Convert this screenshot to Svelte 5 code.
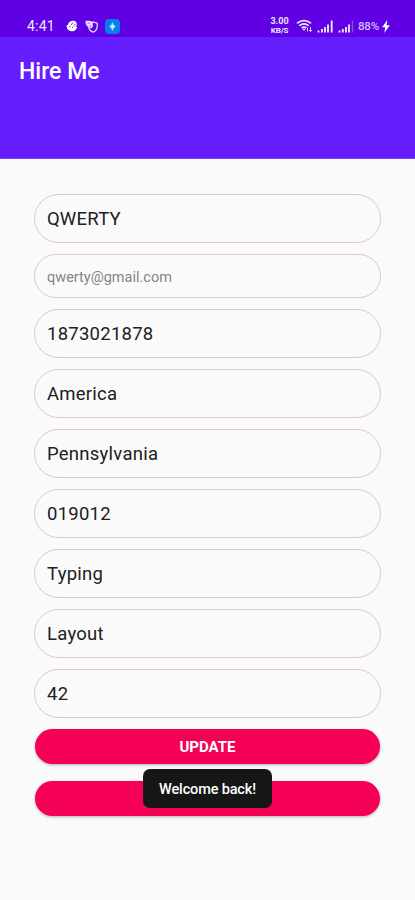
<script>
  const fields = [
    { name: "name", value: "QWERTY" },
    { name: "email", value: "qwerty@gmail.com", readonly: true },
    { name: "phone", value: "1873021878" },
    { name: "country", value: "America" },
    { name: "state", value: "Pennsylvania" },
    { name: "pincode", value: "019012" },
    { name: "skill", value: "Typing" },
    { name: "subject", value: "Layout" },
    { name: "age", value: "42" },
  ];
</script>

<div class="screen">
  <div class="status">
    <span class="time">4:41</span>
    <svg class="ball" width="12" height="12" viewBox="0 0 12 12">
      <path d="M6.500.8c2.500-.5 4.700 1.400 4.500 4.200L10 6l1 1.500c-.6 2.500-2.800 4-5.500 3.700C3 11 1.200 9.700 1 7.500L.5 5.500 2 4.800C2.200 2.500 4 1 6.500.8z" fill="#fff" />
      <path d="M7 2.500 5.200 5M3 6.800l1.600-.8M6 8l1.500-1.500M8 5l1.500-.5" stroke="#6a20e8" stroke-width=".9" fill="none" />
    </svg>
    <svg class="shield" width="13" height="13" viewBox="0 0 13 13">
      <path d="M4 3.200 8 2l4.200 1.200v3.300c0 2.600-1.700 4.600-4.200 5.700-2.500-1.100-4-2.700-4.200-5z" fill="none" stroke="#e6d8ff" stroke-width="1.300" />
      <path d="M.5.800h4.500l2.800 1.700v4L6.300 8.500 4 7.500 1.800 6 .6 4z" fill="#e6d8ff" />
      <path d="M2.500 3.200h2M5.500 5.500v1.500" stroke="#7a3cee" stroke-width=".8" />
    </svg>
    <svg class="app" width="15" height="15" viewBox="0 0 15 15">
      <rect width="15" height="15" rx="4" fill="#087df0" />
      <path d="M7.500 3 9 6 11 7.500 9 9 7.500 12 6 9 4 7.500 6 6z" fill="#8ee5ff" />
      <circle cx="7.500" cy="7.500" r="1" fill="#fff" />
    </svg>

    <div class="speed">
      <span>3.00</span>
      <span class="unit">KB/S</span>
    </div>
    <svg class="wifi" width="17" height="14" viewBox="0 0 17 14">
      <path d="M1 4.300C5 .8 11 .8 15 4.300M3.300 6.700c3-2.300 6.400-2.300 9.400 0M5.700 9c1.500-1.100 3.100-1.100 4.600 0" fill="none" stroke="#eee3ff" stroke-width="1.700" />
      <path d="M6.300 9.700h3.400L8 12z" fill="#eee3ff" />
      <path d="M11.500 12.500V8.500M14.500 8v4.500M13 11l1.500 1.500L16 11" fill="none" stroke="#d9c4ff" stroke-width="1" />
    </svg>
    <svg class="signal" width="17" height="13" viewBox="0 0 17 13">
      <path d="M1.500 12.500v-2M5 12.500V9M8 12.500V7M11 12.500V4.500M14.700 12.500V.5" stroke="#eee3ff" stroke-width="1.900" />
    </svg>
    <svg class="signal" width="17" height="13" viewBox="0 0 17 13">
      <path d="M1.500 12.500v-2M4.800 12.500V9M8 12.500V7M11 12.500V4.500" stroke="#eee3ff" stroke-width="1.900" />
      <path d="M14.500 12.500V.5" stroke="#8a49f0" stroke-width="1.500" />
    </svg>
    <span class="battery">88%</span>
    <svg class="bolt" width="8" height="13" viewBox="0 0 8 13">
      <path d="M5.300 0 .2 7.200h3L2.300 13 7.800 5.300H4.600z" fill="#fff" />
    </svg>
  </div>

  <header>
    <h1>Hire Me</h1>
  </header>

  <form>
    {#each fields as field}
      <input
        type="text"
        class:readonly={field.readonly}
        name={field.name}
        value={field.value}
        readonly={field.readonly}
        aria-label={field.name}
      />
    {/each}
    <button type="button">UPDATE</button>
    <div class="last">
      <button type="button" aria-label="Continue"></button>
      <div class="toast" role="status">Welcome back!</div>
    </div>
  </form>
</div>

<style>
  :global(body) {
    background: #fafafa;
  }
  .screen {
    width: 415px;
    height: 900px;
    overflow: hidden;
    background: #fafafa;
    font-family: Roboto, sans-serif;
  }
  .status {
    display: flex;
    align-items: center;
    height: 37px;
    box-sizing: border-box;
    padding: 15px 25px 0 27px;
    background: #6000e5;
    color: #f0e6ff;
  }
  .time {
    width: 39px;
    font-size: 14px;
    line-height: 22px;
    letter-spacing: 0.2px;
  }
  .shield {
    margin-left: 7px;
  }
  .app {
    margin-left: 7px;
  }
  .speed {
    display: flex;
    flex-direction: column;
    width: 19px;
    margin-left: auto;
    font-size: 9px;
    font-weight: 700;
    line-height: 9px;
    text-align: center;
  }
  .unit {
    font-size: 8px;
    letter-spacing: -0.2px;
  }
  .wifi {
    margin-left: 7px;
  }
  .signal {
    margin-left: 4px;
  }
  .battery {
    width: 24px;
    margin-left: 3px;
    color: #d5bcfb;
    font-size: 11.5px;
    font-weight: 500;
    letter-spacing: -0.2px;
  }
  .bolt {
    flex-shrink: 0;
  }
  header {
    height: 122px;
    box-sizing: border-box;
    padding: 21px 19px 0;
    background: #651fff;
    border-bottom: 1px solid #7a45f5;
  }
  h1 {
    margin: 0;
    color: #fff;
    font-size: 23px;
    font-weight: 500;
    line-height: 28px;
  }
  form {
    display: flex;
    flex-direction: column;
    gap: 11px;
    padding: 35px 34px 0;
  }
  input {
    display: block;
    height: 49px;
    box-sizing: border-box;
    padding: 1px 12px 0;
    border: 1px solid #dfc5d0;
    border-radius: 25px;
    outline: none;
    background: transparent;
    color: #202020;
    font-family: inherit;
    font-size: 18.5px;
    letter-spacing: 0.25px;
  }
  .readonly {
    height: 44px;
    padding-top: 2px;
    color: #858585;
    font-size: 14.5px;
    letter-spacing: 0;
  }
  button {
    display: block;
    width: 345px;
    height: 35px;
    margin: 0 auto;
    padding: 1px 0 0;
    border: none;
    border-radius: 18px;
    background: #f50057;
    box-shadow: 0 1px 3px #0000004d;
    color: #fff;
    font-family: inherit;
    font-size: 15px;
    font-weight: 700;
  }
  .last {
    position: relative;
    margin-top: 6px;
  }
  .toast {
    position: absolute;
    top: -12px;
    left: 109px;
    width: 129px;
    height: 39px;
    border-radius: 7px;
    background: #161616;
    color: #fff;
    font-size: 14.5px;
    font-weight: 500;
    letter-spacing: -0.15px;
    line-height: 41px;
    text-align: center;
  }
</style>
